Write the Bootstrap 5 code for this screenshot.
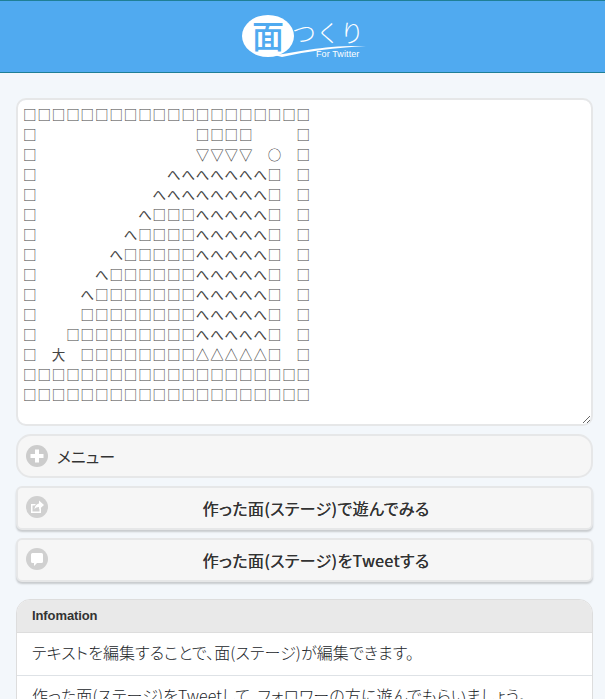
<!DOCTYPE html>
<html lang="ja">
<head>
    <meta charset="utf-8">
    <title>面つくり For Twitter</title>
    <link href="https://cdn.jsdelivr.net/npm/bootstrap@5.3.0/dist/css/bootstrap.min.css" rel="stylesheet">
    <style>
        html, body { overflow: hidden; }
        body {
            background: #f3f7fb;
            color: #333;
            font-family: "Liberation Sans", "Noto Sans CJK JP", sans-serif;
            font-size: 16px;
        }
        .site-head {
            height: 73px;
            background: #50aaf0;
            border-top: 1px solid #1f7f96;
            border-bottom: 1px solid #1f7f96;
        }
        .logo-kanji { font-family: "Noto Sans CJK JP", sans-serif; font-size: 32px; font-weight: 500; fill: #50aaf0; }
        .logo-kana { font-family: "Noto Sans CJK JP", sans-serif; font-size: 24px; font-weight: 300; fill: #fff; }
        .logo-sub { font-family: "Liberation Sans", sans-serif; font-size: 9px; fill: #fff; letter-spacing: .1px; }
        .page-main { padding: 25px 12px 0 16px; }
        .stage-edit {
            display: block;
            width: 577px;
            height: 328px;
            padding: 4px 5px;
            border: 2px solid #e6e7e8;
            border-radius: 10px;
            font-family: "Noto Sans CJK JP", sans-serif;
            font-size: 13.5px;
            letter-spacing: .9px;
            line-height: 20px;
            color: #444;
            white-space: pre;
            overflow: hidden;
        }
        .stage-edit:focus { box-shadow: none; border-color: #e6e7e8; }
        .jm-btn {
            position: relative;
            display: block;
            width: 577px;
            height: 44px;
            line-height: 36px;
            padding: 0 0 0 23px;
            background: #f6f6f6;
            border: 2px solid #e6e7e8;
            border-radius: 6px;
            color: #333;
            font-family: "Noto Sans CJK JP", sans-serif;
            font-size: 16px;
            font-weight: 400;
            letter-spacing: .4px;
            text-shadow: .3px 0 0 #333;
            font-feature-settings: "palt";
            box-shadow: 0 2px 2px rgba(0,0,0,.18);
        }
        .jm-btn:hover { background: #f6f6f6; color: #333; border-color: #e6e7e8; }
        .jm-menu {
            border-radius: 15px;
            box-shadow: none;
            text-align: left;
            padding-left: 39px;
            letter-spacing: 0;
            text-shadow: none;
        }
        .jm-ico {
            position: absolute;
            left: 8px;
            top: 8px;
            width: 22px;
            height: 22px;
        }
        .jm-menu .jm-ico { top: 9px; }
        .info-box {
            width: 577px;
            margin-top: 17px;
            border: 1px solid #ddd;
            border-radius: 14px 14px 0 0;
            overflow: hidden;
            background: #fff;
        }
        .info-head {
            height: 33px;
            line-height: 32px;
            padding: 0 15px;
            background: #e9e9e9;
            font-size: 13px;
            font-weight: 700;
            letter-spacing: -.1px;
            border-bottom: 1px solid #ddd;
            border-radius: 0;
        }
        .info-row {
            height: 43px;
            line-height: 38px;
            padding: 0 15px;
            font-family: "Noto Sans CJK JP", sans-serif;
            font-size: 16px;
            font-weight: 300;
            letter-spacing: .1px;
            font-feature-settings: "palt";
            border-color: #ddd;
            white-space: nowrap;
        }
    </style>
</head>
<body>
    <header class="site-head d-flex justify-content-center">
        <svg width="130" height="71" viewBox="0 0 130 71">
            <ellipse cx="30" cy="35" rx="26" ry="21" fill="#fff"/>
            <path d="M36 54 C62 51 84 44 128 45 C96 47 70 50 44 56 Z" fill="#fff"/>
            <text x="30" y="47" text-anchor="middle" class="logo-kanji">面</text>
            <text x="54" y="41" class="logo-kana">つくり</text>
            <text x="78" y="56" class="logo-sub">For Twitter</text>
        </svg>
    </header>

    <main class="page-main d-flex flex-column">
        <textarea class="form-control stage-edit" spellcheck="false">□□□□□□□□□□□□□□□□□□□□
□　　　　　　　　　　　□□□□　　　□
□　　　　　　　　　　　▽▽▽▽　○　□
□　　　　　　　　　へへへへへへへ□　□
□　　　　　　　　へへへへへへへへ□　□
□　　　　　　　へ□□□へへへへへ□　□
□　　　　　　へ□□□□へへへへへ□　□
□　　　　　へ□□□□□へへへへへ□　□
□　　　　へ□□□□□□へへへへへ□　□
□　　　へ□□□□□□□へへへへへ□　□
□　　　□□□□□□□□へへへへへ□　□
□　　□□□□□□□□□へへへへへ□　□
□　大　□□□□□□□□△△△△△□　□
□□□□□□□□□□□□□□□□□□□□
□□□□□□□□□□□□□□□□□□□□</textarea>

        <button type="button" class="btn jm-btn jm-menu mt-2">
            <svg class="jm-ico" viewBox="0 0 22 22"><circle cx="11" cy="11" r="11" fill="#ccc"/><path d="M9 4.500h4V9h4.500v4H13v4.500H9V13H4.500V9H9z" fill="#fff"/></svg>
            メニュー
        </button>
        <button type="button" class="btn jm-btn mt-2">
            <svg class="jm-ico" viewBox="0 0 22 22"><circle cx="11" cy="11" r="11" fill="#d0d0d0"/><path d="M5 8h5l-1.500 1.500H6.500v6h7V13l1.500-1.500V17H5z" fill="#fff"/><path d="M13 4.500l5 4.500-5 4.500V11c-2 0-3.500.7-4.500 2.500C8.700 10.500 10.500 7.800 13 7.500z" fill="#fff"/></svg>
            作った面(ステージ)で遊んでみる
        </button>
        <button type="button" class="btn jm-btn mt-2">
            <svg class="jm-ico" viewBox="0 0 22 22"><circle cx="11" cy="11" r="11" fill="#d0d0d0"/><path d="M6.500 5h9A1.500 1.500 0 0 1 17 6.500v7a1.500 1.500 0 0 1-1.500 1.500H11l-3 3v-3H6.500A1.500 1.500 0 0 1 5 13.500v-7A1.500 1.500 0 0 1 6.500 5z" fill="#fff"/></svg>
            作った面(ステージ)をTweetする
        </button>

        <section class="info-box list-group">
            <div class="info-head">Infomation</div>
            <div class="list-group-item info-row rounded-0 border-0 border-bottom">テキストを編集することで、面(ステージ)が編集できます。</div>
            <div class="list-group-item info-row rounded-0 border-0 border-bottom">作った面(ステージ)をTweetして、フォロワーの方に遊んでもらいましょう。</div>
        </section>
    </main>
</body>
</html>
